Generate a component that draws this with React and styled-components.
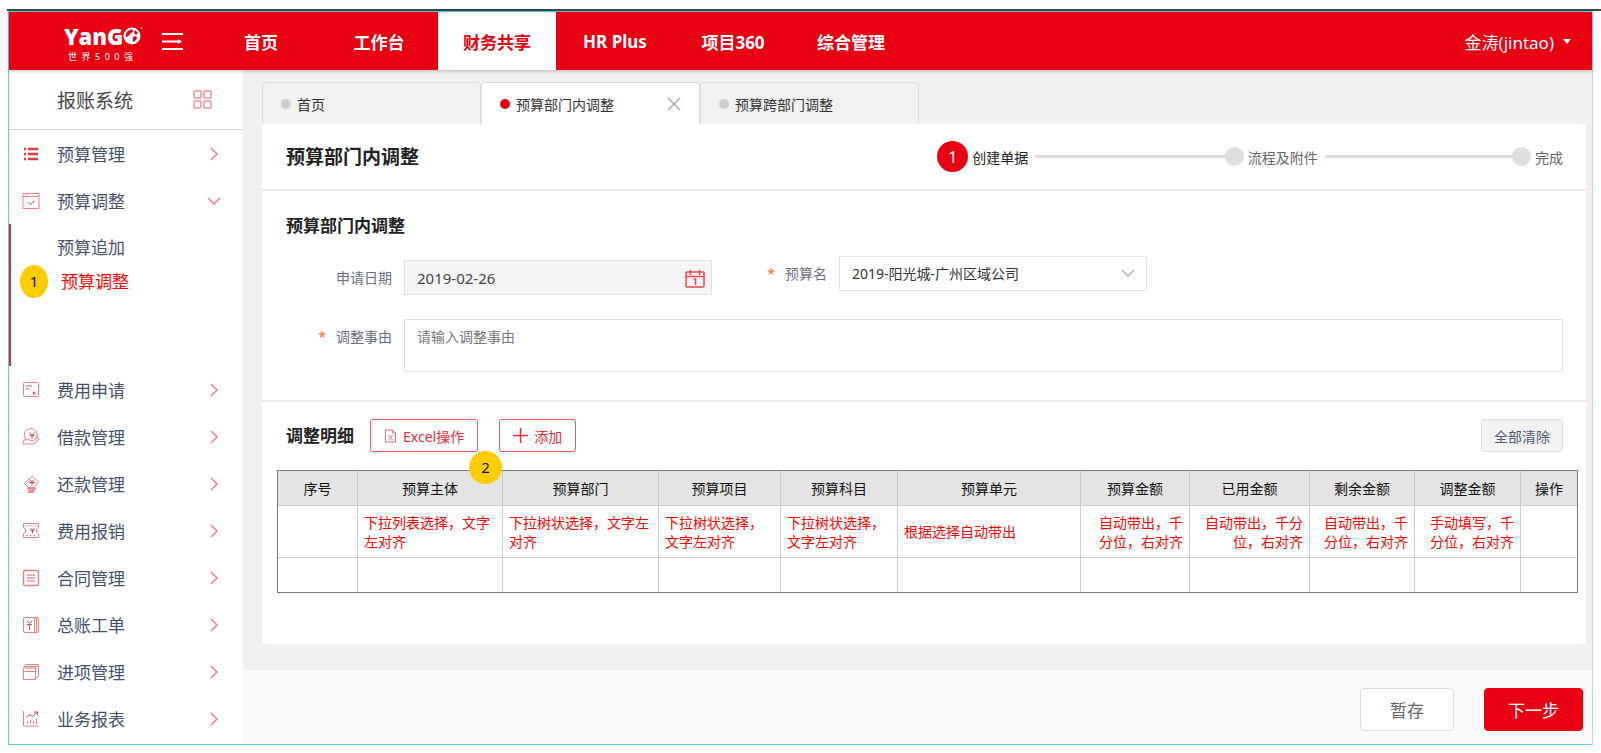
import { useState } from "react";
import styled, { createGlobalStyle } from "styled-components";

const GlobalStyle = createGlobalStyle`
  * {
    box-sizing: border-box;
  }

  body {
    margin: 0;
    background: #fff;
    color: #222;
    font-family: "Noto Sans", "Noto Sans CJK SC", sans-serif;
    font-size: 14px;
  }

  button, input, select, textarea {
    font: inherit;
    color: inherit;
  }

  button {
    padding: 0;
    border: 0;
    background: none;
    cursor: pointer;
  }

  ul, ol {
    margin: 0;
    padding: 0;
    list-style: none;
  }

  svg {
    display: block;
    flex: none;
  }
`;

const Page = styled.div`
  margin: 9px 0 0 7px;
  padding: 0 8px 8px 1px;
  border-top: 2px solid #40454c;
  position: relative;
`;

const Frame = styled.div`
  border: 1px solid #5fd0da;
  border-right-color: #a0e2e6;
`;

const Header = styled.header`
  position: relative;
  z-index: 1;
  display: flex;
  height: 58px;
  background: #e80012;
  color: #fff;
  font-size: 17px;
  box-shadow: 0 1px 4px rgba(0, 0, 0, 0.25);
`;

const Brand = styled.div`
  display: flex;
  align-items: center;
  gap: 22px;
  flex: none;
  width: 193px;
  padding-left: 55px;
`;

const Logo = styled.div`
  width: 76px;
  padding-top: 4px;
`;

const LogoName = styled.div`
  display: flex;
  align-items: center;
  font-family: "Open Sans", sans-serif;
  font-size: 22px;
  font-weight: 800;
  line-height: 27px;
`;

const LogoSlogan = styled.div`
  display: flex;
  justify-content: space-between;
  padding: 0 7px 0 4px;
  font-size: 9px;
  line-height: 14px;
`;

const Nav = styled.nav`
  display: flex;
`;

const NavLink = styled.a`
  display: flex;
  align-items: center;
  justify-content: center;
  width: 118px;
  font-weight: 700;
  text-decoration: none;
  color: ${(props) => (props.$active ? "#e80012" : "#fff")};
  background: ${(props) => (props.$active ? "#fff" : "transparent")};
`;

const UserButton = styled.button`
  display: flex;
  align-items: center;
  gap: 9px;
  margin-left: auto;
  padding-right: 21px;
`;

const Body = styled.div`
  display: flex;
`;

const Sidebar = styled.aside`
  flex: none;
  width: 234px;
  background: #fff;
`;

const SystemTitle = styled.div`
  display: flex;
  align-items: center;
  justify-content: space-between;
  height: 60px;
  padding: 0 31px 0 48px;
  border-bottom: 1px solid #d4d4d4;
  color: #444;
  font-size: 19px;
`;

const MenuButton = styled.button`
  display: flex;
  align-items: center;
  width: 100%;
  height: 47px;
  padding: 0 22px 0 13px;
  color: #44506a;
  font-size: 17px;
  text-align: left;
`;

const MenuText = styled.span`
  flex: 1;
  padding-left: 17px;
`;

const SubMenu = styled.ul`
  height: 142px;
  padding: 7px 0 0 46px;
  border-left: 2px solid #c8323f;
`;

const SubItem = styled.li`
  position: relative;
  height: 34px;
  line-height: 34px;
`;

const SubLink = styled.a`
  padding-left: ${(props) => (props.$active ? "4px" : "0")};
  color: ${(props) => (props.$active ? "#f00" : "#44506a")};
  font-size: 17px;
  text-decoration: none;
`;

const Badge = styled.span`
  position: absolute;
  top: ${(props) => props.$top}px;
  left: ${(props) => props.$left}px;
  width: ${(props) => props.$width}px;
  height: 33px;
  border-radius: 50%;
  background: #fc0;
  color: #111;
  font-size: 15px;
  line-height: 33px;
  text-align: center;
`;

const Main = styled.main`
  display: flex;
  flex: 1;
  flex-direction: column;
  min-width: 0;
  background: #f0f0f0;
`;

const Content = styled.div`
  flex: 1;
  padding: 12px 6px 26px 19px;
`;

const Tabs = styled.div`
  display: flex;
`;

const Tab = styled.div`
  display: flex;
  align-items: center;
  justify-content: space-between;
  width: 219px;
  height: 42px;
  padding: 0 18px;
  border: 1px solid #dcdcdc;
  border-bottom: 0;
  border-radius: 4px 4px 0 0;
  background: ${(props) => (props.$active ? "#fff" : "#f1f1f1")};
`;

const TabButton = styled.button`
  display: flex;
  align-items: center;
  gap: 6px;
  color: #333;

  &::before {
    content: "";
    width: 10px;
    height: 10px;
    border-radius: 50%;
    background: ${(props) => (props.$active ? "#e80012" : "#cfcfcf")};
  }
`;

const Card = styled.div`
  border-radius: 0 4px 4px 4px;
  background: #fff;
`;

const CardHeader = styled.div`
  display: flex;
  align-items: center;
  justify-content: space-between;
  height: 67px;
  padding: 0 23px 0 24px;
  border-bottom: 2px solid #e8e8e8;
`;

const PageTitle = styled.h1`
  margin: 0;
  font-size: 19px;
  font-weight: 700;
  line-height: 28px;
`;

const Steps = styled.ol`
  display: flex;
  align-items: center;
  width: 49%;
`;

const Step = styled.li`
  display: flex;
  align-items: center;
  flex: ${(props) => (props.$last ? "none" : "1 1 0")};
  color: ${(props) => (props.$current ? "#222" : "#666")};

  &::after {
    content: "";
    display: ${(props) => (props.$last ? "none" : "block")};
    flex: 1;
    height: 3px;
    margin-left: 7px;
    background: #dedede;
  }
`;

const StepDot = styled.span`
  width: ${(props) => (props.$current ? "31px" : "19px")};
  height: ${(props) => (props.$current ? "31px" : "19px")};
  margin-right: 4px;
  border-radius: 50%;
  background: ${(props) => (props.$current ? "#e80012" : "#dedede")};
  color: #fff;
  font-size: 17px;
  line-height: 31px;
  text-align: center;
`;

const FormSection = styled.section`
  padding: 23px 23px 28px 24px;
  border-bottom: 2px solid #e8e8e8;
`;

const SectionTitle = styled.h2`
  margin: 0;
  font-size: 17px;
  font-weight: 700;
  line-height: 24px;
`;

const FormRow = styled.div`
  display: flex;
  margin-top: ${(props) => props.$gap}px;
`;

const Label = styled.label`
  display: flex;
  justify-content: flex-end;
  gap: 10px;
  flex: none;
  width: ${(props) => props.$width}px;
  margin-right: 12px;
  color: #6b7080;
  line-height: 35px;
`;

const Required = styled.span`
  color: #ff6a2b;
`;

const Control = styled.div`
  position: relative;
  width: 308px;
`;

const DateField = styled.div`
  display: flex;
  padding-top: 4px;
`;

const DateInput = styled.input`
  width: 100%;
  height: 35px;
  padding: 0 12px;
  border: 1px solid #e0e0e0;
  background: #f5f5f5;
  font-size: 15px;
  color: #444;
`;

const FieldIcon = styled.span`
  position: absolute;
  top: ${(props) => props.$top}px;
  right: ${(props) => props.$right}px;
  pointer-events: none;
`;

const Select = styled.select`
  width: 100%;
  height: 35px;
  padding: 0 12px;
  border: 1px solid #e4e4e4;
  border-radius: 0;
  background: #fff;
  appearance: none;
  color: #333;
`;

const TextArea = styled.textarea`
  flex: 1;
  height: 53px;
  padding: 7px 12px;
  border: 1px solid #e0e0e0;
  line-height: 20px;
  resize: none;

  &::placeholder {
    color: #777;
  }
`;

const Toolbar = styled.div`
  position: relative;
  display: flex;
  align-items: center;
  margin-bottom: 18px;
  padding: 0 23px 0 24px;
`;

const ToolButton = styled.button`
  display: flex;
  align-items: center;
  gap: 6px;
  height: 33px;
  margin-left: ${(props) => props.$gap}px;
  padding: 0 13px;
  border: 1px solid #ee5562;
  border-radius: 3px;
  color: #e82c3c;
`;

const ClearButton = styled.button`
  width: 82px;
  height: 33px;
  margin-left: auto;
  border: 1px solid #dcdcdc;
  border-radius: 3px;
  background: #f2f2f2;
  color: #4d5a75;
`;

const DetailSection = styled.section`
  padding: 17px 0 51px;
`;

const TableWrapper = styled.div`
  padding: 0 9px 0 15px;
`;

const Table = styled.table`
  width: 100%;
  border: 1px solid #7b7b7b;
  border-spacing: 0;
  table-layout: fixed;
`;

const HeadCell = styled.th`
  width: ${(props) => props.$width}px;
  height: 34px;
  padding: 0;
  border-left: 1px solid #c8c8c8;
  background: #e4e4e4;
  color: #111;
  font-weight: 400;

  &:first-child {
    border-left: 0;
  }
`;

const Cell = styled.td`
  height: ${(props) => props.$height}px;
  padding: 0 6px;
  border-top: 1px solid #cfcfcf;
  border-left: 1px solid #cfcfcf;
  color: #f00;
  line-height: 19px;
  text-align: ${(props) => props.$align};

  &:first-child {
    border-left: 0;
  }
`;

const Footer = styled.footer`
  display: flex;
  justify-content: flex-end;
  gap: 30px;
  height: 74px;
  padding: 18px 9px 0 0;
  background: #fafafa;
`;

const FooterButton = styled.button`
  width: ${(props) => (props.$primary ? "99px" : "94px")};
  height: 43px;
  border: 1px solid ${(props) => (props.$primary ? "#e80012" : "#dcdcdc")};
  border-radius: 4px;
  background: ${(props) => (props.$primary ? "#e80012" : "#fff")};
  color: ${(props) => (props.$primary ? "#fff" : "#666")};
  font-size: 17px;
`;

const MenuSvg = ({ children }) => (
  <svg width="18" height="18" viewBox="0 0 18 18" fill="none" stroke="#e9808a">
    {children}
  </svg>
);

const icons = {
  list: (
    <MenuSvg>
      <path d="M2 4h2M2 9h2M2 14h2M6 4h10M6 9h10M6 14h10" stroke="#e63a48" strokeWidth="2.4" />
    </MenuSvg>
  ),
  check: (
    <MenuSvg>
      <path d="M1 1.5h16v15H1zM1 4.500h16" />
      <path d="M3 3h1M5 3h1" />
      <path d="M6 10l2.500 2.500 4-4" stroke="#e25a66" />
    </MenuSvg>
  ),
  apply: (
    <MenuSvg>
      <rect x="1.5" y="1.5" width="15" height="14" rx="1" />
      <path d="M4 5h6M4 8h3" stroke="#e25a66" />
      <path d="M12 10.5v3M10.5 12h3" stroke="#e25a66" strokeWidth="1.5" />
    </MenuSvg>
  ),
  loan: (
    <MenuSvg>
      <path d="M4 11.5a6.5 6.5 0 1 1 10.5-1.5" />
      <path d="M7.5 4.5l2.500 3 2.500-3M7.5 7.5h5M10 7.5v3.500" stroke="#e04452" />
      <path d="M1.5 12.5l4-1.5 3 1.5h3l4.5-3 1 1.5-5 5h-9l-2 0z" />
    </MenuSvg>
  ),
  repay: (
    <MenuSvg>
      <path d="M10 .8l6.5 6-4 5.7H6.5l-4-4z" />
      <path d="M7.5 4.5l2.500 2.500 2-2.500M7 7.5h6M10 7.5v3" stroke="#e04452" />
      <path d="M5 13.5h9M6 15.5h7M6 17.2h6" strokeWidth="1.5" />
    </MenuSvg>
  ),
  expense: (
    <MenuSvg>
      <path d="M1.5 1.5h15v4l-2 1.5v3l2 2v3.500h-15V12l2-2V7l-2-1.5z" />
      <path d="M3.5 4h11M3.5 13.5h11" strokeDasharray="2 2" />
      <path d="M8.5 6l2 2 2-2M8.5 8.5h4M10.5 8.5v3" stroke="#e04452" />
    </MenuSvg>
  ),
  contract: (
    <MenuSvg>
      <rect x="1.5" y="1.5" width="15" height="15" rx="1.5" strokeWidth="1.5" />
      <path d="M5 6h8M5 9h8M5 12h8" stroke="#e25a66" />
    </MenuSvg>
  ),
  ledger: (
    <MenuSvg>
      <rect x="1.5" y="1.5" width="15" height="15" rx="1.5" />
      <path d="M12.5 1.5v15M14.5 2v14" />
      <path d="M5 5l2.500 2.500L10 5M5 8.5h5M7.5 8v6" stroke="#e04452" />
    </MenuSvg>
  ),
  input: (
    <MenuSvg>
      <path d="M1.5 5l2-3.500h13v11l-3 4h-12z" />
      <path d="M1.5 5h12v11.500M13.5 5l3-3M1.5 8.5h12M3 3.5h12" />
    </MenuSvg>
  ),
  report: (
    <MenuSvg>
      <path d="M1.5 1v15h15" />
      <path d="M5.5 14v-3M8.5 14v-4M11.5 14v-3M14.5 14V9" />
      <path d="M4 7.5l4-3 2.500 2 5-4.500M12 2h3.500v3" stroke="#e04452" />
    </MenuSvg>
  ),
};

const Chevron = ({ down, color = "#e9808a" }) => (
  <svg width="14" height="14" viewBox="0 0 14 14" fill="none" stroke={color} strokeWidth="1.5">
    <path d={down ? "M1 4l6 6 6-6" : "M4 1l6 6-6 6"} />
  </svg>
);

const navItems = ["首页", "工作台", "财务共享", "HR Plus", "项目360", "综合管理"];

const menuItems = [
  { name: "预算管理", icon: "list" },
  { name: "预算调整", icon: "check", open: true },
  { name: "费用申请", icon: "apply" },
  { name: "借款管理", icon: "loan" },
  { name: "还款管理", icon: "repay" },
  { name: "费用报销", icon: "expense" },
  { name: "合同管理", icon: "contract" },
  { name: "总账工单", icon: "ledger" },
  { name: "进项管理", icon: "input" },
  { name: "业务报表", icon: "report" },
];

const tabs = ["首页", "预算部门内调整", "预算跨部门调整"];

const columns = [
  { title: "序号", width: 79, text: "" },
  { title: "预算主体", width: 145, text: "下拉列表选择，文字左对齐" },
  { title: "预算部门", width: 156, text: "下拉树状选择，文字左对齐" },
  { title: "预算项目", width: 122, text: "下拉树状选择，文字左对齐" },
  { title: "预算科目", width: 117, text: "下拉树状选择，文字左对齐" },
  { title: "预算单元", width: 183, text: "根据选择自动带出" },
  { title: "预算金额", width: 109, text: "自动带出，千分位，右对齐", align: "right" },
  { title: "已用金额", width: 120, text: "自动带出，千分位，右对齐", align: "right" },
  { title: "剩余金额", width: 105, text: "自动带出，千分位，右对齐", align: "right" },
  { title: "调整金额", width: 106, text: "手动填写，千分位，右对齐", align: "right" },
  { title: "操作", width: 57, text: "" },
];

const TopBar = () => (
  <Header>
    <Brand>
      <Logo>
        <LogoName>
          YanG
          <svg width="20" height="18" viewBox="0 0 20 18">
            <circle cx="9" cy="9" r="8.5" fill="#fff" />
            <path
              d="M7 3c2-1 3 0 3 1s-2 2-3 3-2 3-4 3c-1-3 1-6 4-7zM12 3l3 3-2 2-2-2zM10 10c2-1 4-1 4 1-1 2-2 3-4 4z"
              fill="#e80012"
            />
            <circle cx="18.5" cy="1" r="1" fill="#f59aa0" />
          </svg>
        </LogoName>
        <LogoSlogan>
          {[..."世界500强"].map((char, i) => (
            <span key={i}>{char}</span>
          ))}
        </LogoSlogan>
      </Logo>
      <button aria-label="收起菜单">
        <svg width="21" height="19" viewBox="0 0 21 19" fill="none" stroke="#fff" strokeWidth="2">
          <path d="M0 2h21M0 9.5h16M0 17h21" />
          <path d="M16 7l4 2.500-4 2.500z" fill="#fff" stroke="none" />
        </svg>
      </button>
    </Brand>
    <Nav>
      {navItems.map((item) => (
        <NavLink key={item} href="#" $active={item === "财务共享"}>
          {item}
        </NavLink>
      ))}
    </Nav>
    <UserButton>
      金涛(jintao)
      <svg width="8" height="5" viewBox="0 0 8 5" fill="#fff">
        <path d="M0 0h8L4 5z" />
      </svg>
    </UserButton>
  </Header>
);

const SideMenu = () => (
  <Sidebar>
    <SystemTitle>
      报账系统
      <svg width="19" height="19" viewBox="0 0 19 19" fill="none" stroke="#ee8f98" strokeWidth="1.5">
        <rect x="1" y="1" width="7" height="7" rx="1" />
        <rect x="11" y="1" width="7" height="7" rx="1" />
        <rect x="1" y="11" width="7" height="7" rx="1" />
        <rect x="11" y="11" width="7" height="7" rx="1" />
      </svg>
    </SystemTitle>
    {menuItems.map((item) => (
      <div key={item.name}>
        <MenuButton>
          {icons[item.icon]}
          <MenuText>{item.name}</MenuText>
          <Chevron down={item.open} />
        </MenuButton>
        {item.open && (
          <SubMenu>
            <SubItem>
              <SubLink href="#">预算追加</SubLink>
            </SubItem>
            <SubItem>
              <Badge $top={0} $left={-37} $width={28}>
                1
              </Badge>
              <SubLink href="#" $active>
                预算调整
              </SubLink>
            </SubItem>
          </SubMenu>
        )}
      </div>
    ))}
  </Sidebar>
);

const BudgetForm = () => {
  const [reason, setReason] = useState("");

  return (
    <FormSection>
      <SectionTitle>预算部门内调整</SectionTitle>
      <FormRow $gap={18}>
        <DateField>
          <Label $width={106} htmlFor="date">
            申请日期
          </Label>
          <Control>
            <DateInput id="date" value="2019-02-26" readOnly />
            <FieldIcon $top={10} $right={7}>
              <svg width="20" height="18" viewBox="0 0 20 18" fill="none" stroke="#ea4553">
                <rect x="1" y="2" width="18" height="15" rx="1" strokeWidth="1.5" />
                <path d="M1 6.5h18" strokeWidth="1.5" />
                <path d="M5.5 0v5M14.5 0v5M8.5 9h2v6" strokeWidth="1.5" />
              </svg>
            </FieldIcon>
          </Control>
        </DateField>
        <Label $width={115} htmlFor="budget">
          <Required>*</Required>
          预算名
        </Label>
        <Control>
          <Select id="budget">
            <option>2019-阳光城-广州区域公司</option>
          </Select>
          <FieldIcon $top={10} $right={12}>
            <Chevron down color="#b5b5b5" />
          </FieldIcon>
        </Control>
      </FormRow>
      <FormRow $gap={24}>
        <Label $width={106} htmlFor="reason">
          <Required>*</Required>
          调整事由
        </Label>
        <TextArea
          id="reason"
          placeholder="请输入调整事由"
          value={reason}
          onChange={(e) => setReason(e.target.value)}
        />
      </FormRow>
    </FormSection>
  );
};

const BudgetDetail = () => (
  <DetailSection>
    <Toolbar>
      <SectionTitle>调整明细</SectionTitle>
      <ToolButton $gap={16}>
        <svg width="13" height="14" viewBox="0 0 13 14" fill="none" stroke="#ee6b76">
          <path d="M1.5 1h7l3 3v9h-10zM8.5 1v3h3" />
          <path d="M4.5 6l4 5M8.5 6l-4 5" />
        </svg>
        Excel操作
      </ToolButton>
      <ToolButton $gap={21}>
        <svg width="15" height="15" viewBox="0 0 15 15" stroke="#e82c3c" strokeWidth="1.5">
          <path d="M7.5 0v15M0 7.5h15" />
        </svg>
        添加
      </ToolButton>
      <ClearButton>全部清除</ClearButton>
      <Badge $top={32} $left={207} $width={33}>
        2
      </Badge>
    </Toolbar>
    <TableWrapper>
      <Table>
        <thead>
          <tr>
            {columns.map((col) => (
              <HeadCell key={col.title} $width={col.width}>
                {col.title}
              </HeadCell>
            ))}
          </tr>
        </thead>
        <tbody>
          <tr>
            {columns.map((col) => (
              <Cell key={col.title} $height={52} $align={col.align || "left"}>
                {col.text}
              </Cell>
            ))}
          </tr>
          <tr>
            {columns.map((col) => (
              <Cell key={col.title} $height={35} />
            ))}
          </tr>
        </tbody>
      </Table>
    </TableWrapper>
  </DetailSection>
);

const App = () => {
  const [activeTab, setActiveTab] = useState("预算部门内调整");

  return (
    <>
      <GlobalStyle />
      <Page>
        <Frame>
          <TopBar />
          <Body>
            <SideMenu />
            <Main>
              <Content>
                <Tabs>
                  {tabs.map((tab) => (
                    <Tab key={tab} $active={tab === activeTab}>
                      <TabButton $active={tab === activeTab} onClick={() => setActiveTab(tab)}>
                        {tab}
                      </TabButton>
                      {tab === activeTab && (
                        <button aria-label="关闭">
                          <svg width="14" height="14" viewBox="0 0 14 14" stroke="#aaa" strokeWidth="1.5">
                            <path d="M1 1l12 12M13 1L1 13" />
                          </svg>
                        </button>
                      )}
                    </Tab>
                  ))}
                </Tabs>
                <Card>
                  <CardHeader>
                    <PageTitle>预算部门内调整</PageTitle>
                    <Steps>
                      <Step $current>
                        <StepDot $current>1</StepDot>
                        创建单据
                      </Step>
                      <Step>
                        <StepDot />
                        流程及附件
                      </Step>
                      <Step $last>
                        <StepDot />
                        完成
                      </Step>
                    </Steps>
                  </CardHeader>
                  <BudgetForm />
                  <BudgetDetail />
                </Card>
              </Content>
              <Footer>
                <FooterButton>暂存</FooterButton>
                <FooterButton $primary>下一步</FooterButton>
              </Footer>
            </Main>
          </Body>
        </Frame>
      </Page>
    </>
  );
};

export default App;
